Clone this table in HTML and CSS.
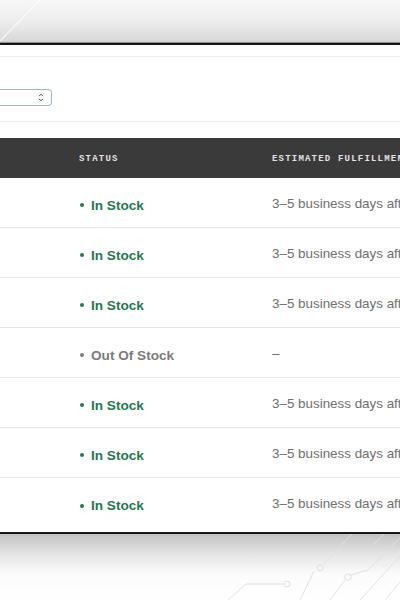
FILE: index.html
```html
<!DOCTYPE html>
<html lang="en">
<head>
    <meta charset="UTF-8">
    <meta name="viewport" content="width=device-width, initial-scale=1.0">
    <title>Inventory</title>
    <link rel="stylesheet" href="styles.css">
</head>
<body>
    <div class="backdrop-top">
        <svg width="400" height="43" viewBox="0 0 400 43">
            <path d="M0 41 L40 0" stroke="#ffffff" stroke-width="1.2" fill="none" opacity="0.8"/>
        </svg>
    </div>

    <div class="screen">
        <div class="topbar"></div>

        <div class="filters">
            <div class="select-box">
                <svg class="chevron" width="6" height="9" viewBox="0 0 6 9">
                    <path d="M1 3.2 L3 1.2 L5 3.2 M1 5.8 L3 7.8 L5 5.8" stroke="#444" stroke-width="1" fill="none"/>
                </svg>
            </div>
        </div>

        <div class="stock-table">
            <div class="table-head">
                <div class="cell cell-name"></div>
                <div class="cell">STATUS</div>
                <div class="cell">ESTIMATED FULFILLMENT</div>
            </div>

            <div class="table-row">
                <div class="cell cell-name"></div>
                <div class="cell"><span class="status in">In Stock</span></div>
                <div class="cell eta">3–5 business days after order</div>
            </div>
            <div class="table-row">
                <div class="cell cell-name"></div>
                <div class="cell"><span class="status in">In Stock</span></div>
                <div class="cell eta">3–5 business days after order</div>
            </div>
            <div class="table-row">
                <div class="cell cell-name"></div>
                <div class="cell"><span class="status in">In Stock</span></div>
                <div class="cell eta">3–5 business days after order</div>
            </div>
            <div class="table-row">
                <div class="cell cell-name"></div>
                <div class="cell"><span class="status out">Out Of Stock</span></div>
                <div class="cell eta">–</div>
            </div>
            <div class="table-row">
                <div class="cell cell-name"></div>
                <div class="cell"><span class="status in">In Stock</span></div>
                <div class="cell eta">3–5 business days after order</div>
            </div>
            <div class="table-row">
                <div class="cell cell-name"></div>
                <div class="cell"><span class="status in">In Stock</span></div>
                <div class="cell eta">3–5 business days after order</div>
            </div>
            <div class="table-row last">
                <div class="cell cell-name"></div>
                <div class="cell"><span class="status in">In Stock</span></div>
                <div class="cell eta">3–5 business days after order</div>
            </div>
        </div>
    </div>

    <div class="backdrop-bottom">
        <svg width="400" height="66" viewBox="0 0 400 66">
            <g stroke="#e0e0e0" stroke-width="1" fill="none">
                <path d="M228 66 L246 50 L284 50"/>
                <circle cx="287" cy="50" r="3"/>
                <path d="M300 66 L314 37"/>
                <circle cx="320" cy="34" r="3"/>
                <path d="M323 31 L352 0"/>
                <path d="M330 66 L345 46"/>
                <circle cx="348" cy="43" r="3.2"/>
                <path d="M351 41 L368 36 L400 4"/>
                <path d="M360 66 L400 22"/>
                <path d="M385 66 L400 48"/>
                <path d="M372 12 L384 0"/>
            </g>
        </svg>
    </div>
</body>
</html>
```

FILE: styles.css
```css
body {
    margin: 0;
    width: 400px;
    height: 600px;
    overflow: hidden;
    font-family: "Liberation Sans", Arial, sans-serif;
    background-color: #ffffff;
    display: flex;
    flex-direction: column;
}

.backdrop-top {
    height: 43px;
    background: linear-gradient(to bottom, #f7f7f7 0%, #ebebeb 55%, #d6d6d6 100%);
}

.backdrop-top svg,
.backdrop-bottom svg {
    display: block;
}

.screen {
    height: 487px;
    background-color: #ffffff;
    border-top: 2px solid #161616;
    border-bottom: 2px solid #161616;
    box-shadow: 0 -1px 0 #8a8a8a, 0 1px 0 #7a7a7a;
    display: flex;
    flex-direction: column;
    overflow: hidden;
}

.backdrop-bottom {
    flex: 1;
    background: linear-gradient(to bottom, #c2c2c2 0%, #e4e4e4 30%, #fbfbfb 60%, #ffffff 100%);
}

.topbar {
    height: 11px;
    border-bottom: 1px solid #eeeeee;
}

.filters {
    padding: 32px 0 15px 0;
    border-bottom: 1px solid #ececec;
}

.select-box {
    width: 46px;
    height: 15px;
    margin-left: -2px;
    border: 1px solid #9db7d9;
    border-left: none;
    border-radius: 0 4px 4px 0;
    display: flex;
    align-items: center;
    justify-content: flex-end;
    padding-right: 7px;
    box-sizing: content-box;
}

.chevron {
    display: block;
}

.stock-table {
    margin-top: 16px;
    flex: 1;
    display: flex;
    flex-direction: column;
}

.table-head,
.table-row {
    display: grid;
    grid-template-columns: 79px 193px 1fr;
    align-items: center;
}

.table-head {
    height: 40px;
    background-color: #3a3a3a;
    color: #e2e2e2;
    font-family: "Liberation Mono", "DejaVu Sans Mono", monospace;
    font-size: 9px;
    font-weight: bold;
    letter-spacing: 1.2px;
    padding-top: 1px;
    box-sizing: border-box;
}

.table-row {
    height: 50px;
    border-bottom: 1px solid #e6e6e6;
    box-sizing: border-box;
    padding-top: 1px;
}

.table-row.last {
    flex: 1;
    border-bottom: none;
    padding-top: 0;
    padding-bottom: 3px;
    height: auto;
}

.cell {
    white-space: nowrap;
    overflow: hidden;
}

.status {
    font-size: 13.6px;
    font-weight: bold;
    display: inline-flex;
    align-items: center;
    gap: 7px;
    margin-left: 1px;
}

.status::before {
    content: "";
    width: 4px;
    height: 4px;
    border-radius: 50%;
    background-color: currentColor;
}

.status.in {
    color: #23784f;
}

.status.out {
    color: #7a7a7a;
}

.eta {
    font-size: 13.4px;
    color: #6e6e6e;
}
```
